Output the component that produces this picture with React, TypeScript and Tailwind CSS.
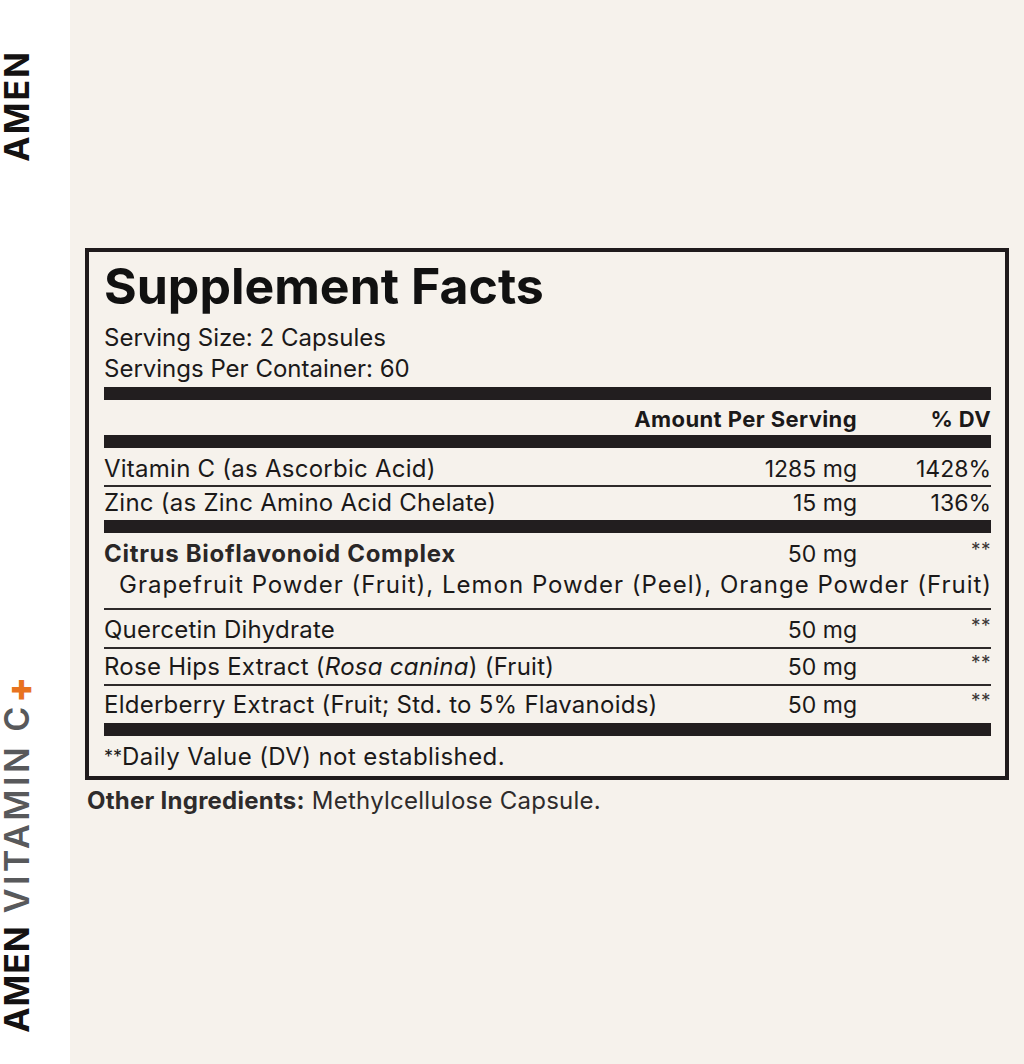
const FONT = "font-['Inter','Liberation_Sans',sans-serif]";

type Nutrient = {
  name: React.ReactNode;
  amount: string;
  dv: string;
  rowClass: string;
};

const nutrients: Nutrient[] = [
  {
    name: "Quercetin Dihydrate",
    amount: "50 mg",
    dv: "**",
    rowClass: "pt-[6px] pb-[3px]",
  },
  {
    name: (
      <>
        Rose Hips Extract (<i>Rosa canina</i>) (Fruit)
      </>
    ),
    amount: "50 mg",
    dv: "**",
    rowClass: "pt-[4px] pb-[3px]",
  },
  {
    name: "Elderberry Extract (Fruit; Std. to 5% Flavanoids)",
    amount: "50 mg",
    dv: "**",
    rowClass: "pt-[5px] pb-[4px]",
  },
];

function Bar() {
  return <div className="h-[13px] bg-[#221e1f]" />;
}

function Rule() {
  return <div className="h-[2px] bg-[#2e2a2a]" />;
}

function Stars() {
  return (
    <span className="self-start pt-[1px] text-[19px] leading-[17px] tracking-[0.5px] text-[#3a3636]">
      **
    </span>
  );
}

function Row({
  name,
  amount,
  dv,
  rowClass,
}: {
  name: React.ReactNode;
  amount: string;
  dv: string;
  rowClass: string;
}) {
  const starred = dv === "**";
  return (
    <div className={`flex items-start ${rowClass}`}>
      <div className="flex-1 text-[24px] leading-[28px] tracking-[0.25px]">
        {name}
      </div>
      <div className="leading-[28px] text-right">{amount}</div>
      <div className="flex w-[134px] justify-end leading-[28px]">
        {starred ? <Stars /> : dv}
      </div>
    </div>
  );
}

function SideStrip() {
  return (
    <aside className="flex w-[70px] shrink-0 flex-col justify-between bg-white pt-[50px] pb-[31px]">
      <div className="rotate-180 [writing-mode:vertical-rl] text-[34px] font-bold leading-[34px] tracking-[2px] text-[#141212]">
        AMEN
      </div>
      <div className="rotate-180 [writing-mode:vertical-rl] text-[34px] leading-[34px]">
        <span className="font-bold tracking-[1px] text-[#141212]">AMEN</span>
        <span className="font-semibold tracking-[3.5px] text-[#58595b]">
          {" "}VITAMIN C
        </span>
        <span className="relative -left-[2px] text-[38px] font-extrabold text-[#e8731f]">
          +
        </span>
      </div>
    </aside>
  );
}

export default function App() {
  return (
    <div className={`flex h-[1064px] w-[1024px] ${FONT} text-[#1b1919]`}>
      <SideStrip />
      <main className="flex-1 bg-[#f6f2ec] pt-[248px] pl-[15px]">
        <section className="w-[924px] border-4 border-[#1f1b1c] pl-[15px] pr-[14px] text-[23px]">
          <h1 className="pt-[9px] text-[50px] font-bold leading-[50px] text-[#111]">
            Supplement Facts
          </h1>
          <div className="mt-[11px] text-[24px] leading-[31px]">
            <p>Serving Size: 2 Capsules</p>
            <p>Servings Per Container: 60</p>
          </div>
          <div className="mt-[3px]">
            <Bar />
          </div>
          <div className="flex h-[35px] items-start pt-[2px] text-[22px] font-bold leading-[35px] tracking-[0.4px]">
            <div className="flex-1" />
            <div className="text-right">Amount Per Serving</div>
            <div className="w-[134px] text-right">% DV</div>
          </div>
          <Bar />
          <Row
            name="Vitamin C (as Ascorbic Acid)"
            amount="1285 mg"
            dv="1428%"
            rowClass="pt-[7px] pb-[2px]"
          />
          <Rule />
          <Row
            name="Zinc (as Zinc Amino Acid Chelate)"
            amount="15 mg"
            dv="136%"
            rowClass="pt-[2px] pb-[3px]"
          />
          <Bar />
          <div className="pt-[7px] pb-[9px]">
            <div className="flex items-start">
              <div className="flex-1 text-[24px] font-bold leading-[28px] tracking-[0.7px] text-[#2a2727]">
                Citrus Bioflavonoid Complex
              </div>
              <div className="leading-[28px] text-right">50 mg</div>
              <div className="flex w-[134px] justify-end leading-[28px]">
                <Stars />
              </div>
            </div>
            <p className="mt-[3px] pl-[15px] text-[24px] leading-[28px] tracking-[1px] whitespace-nowrap">
              Grapefruit Powder (Fruit), Lemon Powder (Peel), Orange Powder
              (Fruit)
            </p>
          </div>
          {nutrients.map((n, i) => (
            <div key={i}>
              <Rule />
              <Row {...n} />
            </div>
          ))}
          <Bar />
          <p className="pt-[7px] pb-[5px] text-[24px] leading-[28px] tracking-[0.4px]">
            <span className="align-top text-[18px] tracking-[0px]">**</span>
            Daily Value (DV) not established.
          </p>
        </section>
        <p className="mt-[7px] ml-[2px] text-[24px] leading-[28px] tracking-[0.25px] text-[#2e2b2b]">
          <span className="font-bold">Other Ingredients:</span> Methylcellulose
          Capsule.
        </p>
      </main>
    </div>
  );
}
